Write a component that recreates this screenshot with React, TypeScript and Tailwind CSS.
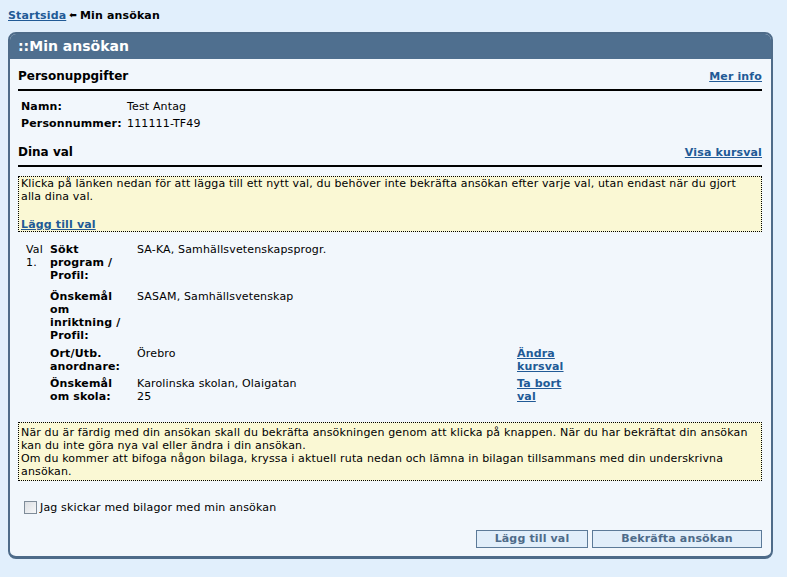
import React from "react";

const font = { fontFamily: '"DejaVu Sans", Verdana, sans-serif' };

interface Choice {
  label: string;
  value: React.ReactNode;
  action?: React.ReactNode;
  gap: string;
}

const choices: Choice[] = [
  { label: "Sökt program / Profil:", value: "SA-KA, Samhällsvetenskapsprogr.", gap: "mb-[8px]" },
  { label: "Önskemål om inriktning / Profil:", value: "SASAM, Samhällsvetenskap", gap: "mb-[5px]" },
  {
    label: "Ort/Utb. anordnare:",
    value: "Örebro",
    action: "Ändra kursval",
    gap: "mb-[4px]",
  },
  {
    label: "Önskemål om skola:",
    value: <span className="block w-[172px]">Karolinska skolan, Olaigatan 25</span>,
    action: "Ta bort val",
    gap: "",
  },
];

function SectionHead({ title, link }: { title: string; link: string }) {
  return (
    <div className="flex items-baseline justify-between border-b-2 border-black pb-[5px]">
      <span className="text-[12px] font-bold text-black leading-[15px] tracking-normal">{title}</span>
      <a href="#" className="text-[11px] font-bold text-[#215a96] underline leading-[13px]">
        {link}
      </a>
    </div>
  );
}

export default function App() {
  return (
    <div style={font} className="min-h-[577px] w-[787px] bg-[#e1effc] text-[11px] leading-[13px] tracking-[0.15px] text-black">
      <div className="px-2 pt-[9px] pb-[10px] flex items-center gap-[3px] font-bold">
        <a href="#" className="text-[#215a96] underline">Startsida</a>
        <span className="text-[9px]">⬅</span>
        <span>Min ansökan</span>
      </div>

      <div className="ml-2 w-[765px] rounded-[8px] border-2 border-b-[3px] border-[#4e6b89] bg-[#f2f7fc] overflow-hidden">
        <div className="bg-[#4f6f8f] h-[25px] pl-[8px] flex items-center text-white font-bold text-[14px] tracking-normal">
          ::Min ansökan
        </div>

        <div className="pl-[8px] pr-[9px] pt-[10px]">
          <SectionHead title="Personuppgifter" link="Mer info" />

          <div className="pl-[3px] pt-[9px] pb-[15px] grid grid-cols-[106px_1fr] gap-y-[4px]">
            <span className="font-bold">Namn:</span>
            <span>Test Antag</span>
            <span className="font-bold">Personnummer:</span>
            <span>111111-TF49</span>
          </div>

          <SectionHead title="Dina val" link="Visa kursval" />

          <div className="mt-[9px] border border-dotted border-black bg-[#faf8d4] px-[2px] pt-[0px] pb-[0px]">
            <p>
              Klicka på länken nedan för att lägga till ett nytt val, du behöver inte bekräfta ansökan efter varje val, utan endast när du gjort alla dina val.
            </p>
            <p className="mt-[15px]">
              <a href="#" className="font-bold text-[#215a96] underline">Lägg till val</a>
            </p>
          </div>

          <div className="mt-[11px] flex">
            <div className="w-[32px] pl-[8px] pr-[2px]">Val 1.</div>
            <div className="flex-1">
              {choices.map((c) => (
                <div key={c.label} className={`flex ${c.gap}`}>
                  <div className="w-[87px] pr-[10px] font-bold">{c.label}</div>
                  <div className="w-[380px]">{c.value}</div>
                  <div className="w-[56px]">
                    {c.action && (
                      <a href="#" className="font-bold text-[#215a96] underline">{c.action}</a>
                    )}
                  </div>
                </div>
              ))}
            </div>
          </div>

          <div className="mt-[19px] border border-dotted border-black bg-[#faf8d4] px-[2px] pt-[3px] pb-[2px]">
            <p>
              När du är färdig med din ansökan skall du bekräfta ansökningen genom att klicka på knappen. När du har bekräftat din ansökan kan du inte göra nya val eller ändra i din ansökan.
            </p>
            <p>
              Om du kommer att bifoga någon bilaga, kryssa i aktuell ruta nedan och lämna in bilagan tillsammans med din underskrivna ansökan.
            </p>
          </div>

          <label className="mt-[20px] ml-[6px] flex items-center gap-[3px]">
            <span className="w-[13px] h-[13px] border border-[#7f8c99] bg-gradient-to-br from-[#dcdfe3] to-[#f7f8f9]" />
            <span>Jag skickar med bilagor med min ansökan</span>
          </label>

          <div className="mt-[16px] pb-[8px] flex justify-end gap-[4px]">
            <button className="w-[112px] h-[18px] border border-[#5c7a98] bg-[#e1eefa] text-[#4e6b89] font-bold text-[11px] leading-[16px]">
              Lägg till val
            </button>
            <button className="w-[170px] h-[18px] border border-[#5c7a98] bg-[#e1eefa] text-[#4e6b89] font-bold text-[11px] leading-[16px]">
              Bekräfta ansökan
            </button>
          </div>
        </div>
      </div>
    </div>
  );
}
